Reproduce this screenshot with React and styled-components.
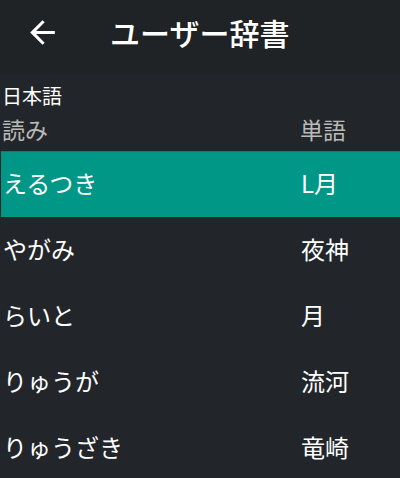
import React from "react";
import styled, { createGlobalStyle } from "styled-components";

const Global = createGlobalStyle`
  *, *::before, *::after { box-sizing: border-box; }
  html, body { margin: 0; padding: 0; background: #212529; }
  body { font-family: "Noto Sans CJK JP", "Noto Sans", sans-serif; color: #ffffff; }
`;

const Page = styled.div`
  width: 400px;
  height: 478px;
  overflow: hidden;
  background: #22262a;
  display: flex;
  flex-direction: column;
`;

const Header = styled.header`
  flex: 0 0 74px;
  height: 74px;
  padding: 0 0 10px 24px;
  background: #1f2326;
  display: flex;
  align-items: center;
`;

const BackButton = styled.button`
  width: 37px;
  height: 37px;
  padding: 0;
  border: 0;
  background: transparent;
  color: #ffffff;
  display: flex;
  cursor: pointer;
`;

const Title = styled.h1`
  margin: 0 0 0 49px;
  font-size: 30px;
  font-weight: 500;
  line-height: 36px;
  letter-spacing: 0;
`;

const Body = styled.main`
  padding: 10px 0 0 1px;
  display: flex;
  flex-direction: column;
`;

const Section = styled.div`
  font-size: 20px;
  line-height: 24px;
  padding-left: 1px;
`;

const ColumnHead = styled.div`
  display: grid;
  grid-template-columns: 298px 1fr;
  font-size: 23px;
  line-height: 28px;
  color: #b9b9b9;
  padding: 7px 0 8px 1px;
`;

const Row = styled.div`
  flex: 0 0 66px;
  height: 66px;
  display: grid;
  grid-template-columns: 298px 1fr;
  align-items: center;
  padding: 0 0 5px 2px;
  font-size: 24px;
  background: ${(p) => (p.$selected ? "#009787" : "transparent")};
  border-top: 1px solid ${(p) => (p.$selected ? "#0b7f72" : "transparent")};
`;

const Cell = styled.span`
  white-space: nowrap;
`;

const entries = [
  ["えるつき", "L月"],
  ["やがみ", "夜神"],
  ["らいと", "月"],
  ["りゅうが", "流河"],
  ["りゅうざき", "竜崎"],
];

export default function App() {
  return (
    <>
      <Global />
      <Page>
        <Header>
          <BackButton aria-label="戻る">
            <svg width="37" height="37" viewBox="0 0 24 24" fill="currentColor">
              <path d="M20 11H7.83l5.59-5.59L12 4l-8 8 8 8 1.41-1.41L7.83 13H20v-2z" />
            </svg>
          </BackButton>
          <Title>ユーザー辞書</Title>
        </Header>
        <Body>
          <Section>日本語</Section>
          <ColumnHead>
            <Cell>読み</Cell>
            <Cell>単語</Cell>
          </ColumnHead>
          {entries.map(([r, w], i) => (
            <Row key={r} $selected={i === 0}>
              <Cell>{r}</Cell>
              <Cell>{w}</Cell>
            </Row>
          ))}
        </Body>
      </Page>
    </>
  );
}
